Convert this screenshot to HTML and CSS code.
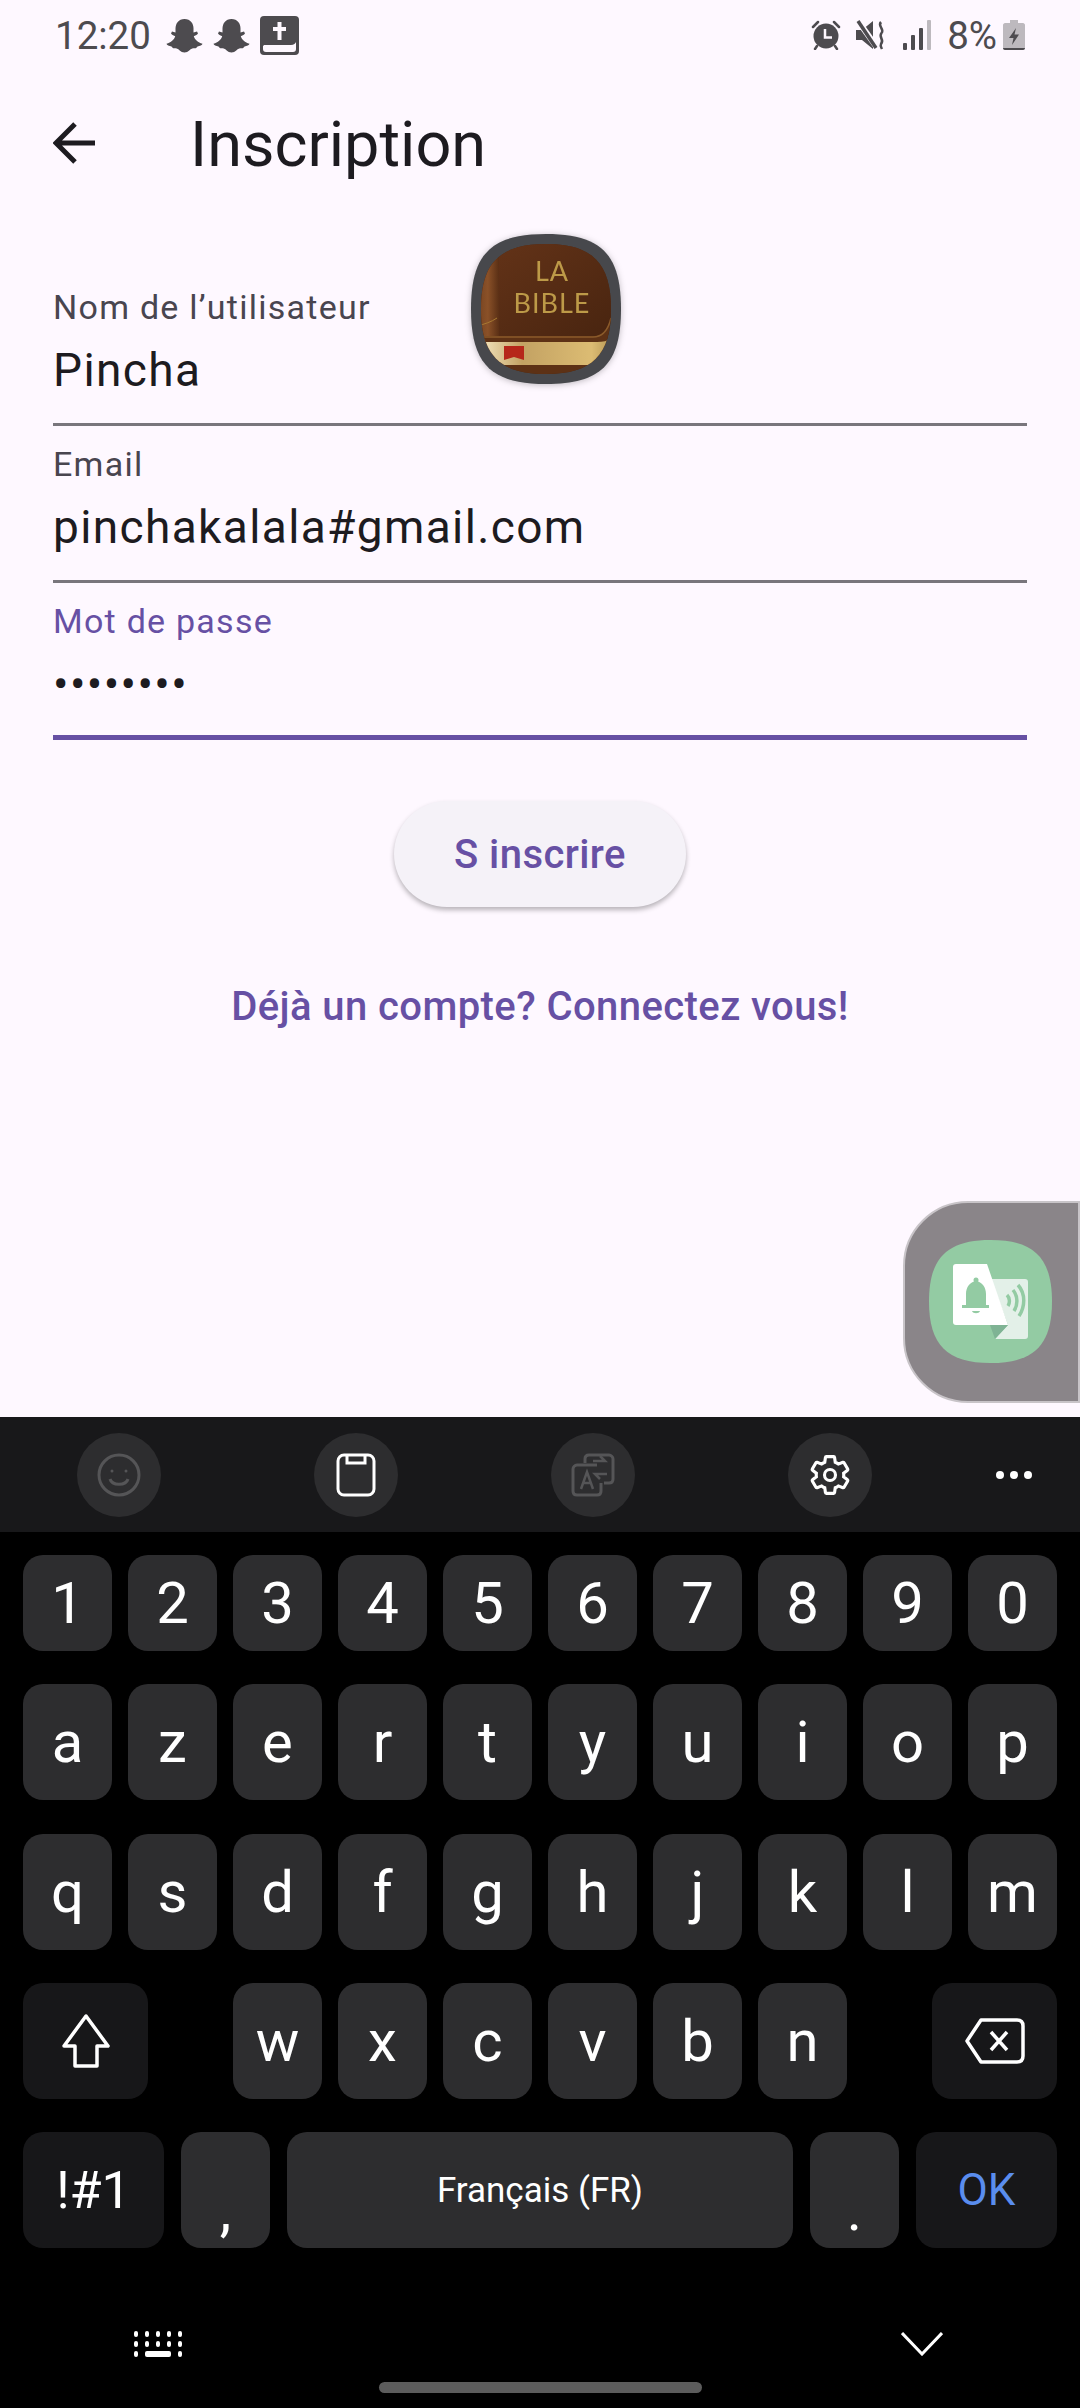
FILE: index.html
```html
<!DOCTYPE html>
<html lang="fr">
<head>
  <meta charset="UTF-8">
  <meta name="viewport" content="width=device-width, initial-scale=1.0">
  <title>Inscription</title>
  <link rel="stylesheet" href="styles.css">
</head>
<body>
<div class="page">

  <div class="status">
    <div class="status-left">
      <span class="time">12:20</span>
      <svg class="ghost" viewBox="0 0 37 35"><path d="M18.5 1C24.5 1 27.5 5.5 27.5 10.5V14.5L31 13.6L32 15.5C31 17 29 17.6 27.8 18.2C28.8 21.5 32 24.5 36.5 25.8C36.3 27.6 33.8 28 31.5 28.6C30.5 30.5 29.5 30.4 27.5 30.2C24.5 30 22.5 34.5 18.5 34.5C14.5 34.5 12.5 30 9.5 30.2C7.5 30.4 6.5 30.5 5.5 28.6C3.2 28 .7 27.6 .5 25.8C5 24.5 8.2 21.5 9.2 18.2C8 17.6 6 17 5 15.5L6 13.6L9.5 14.5V10.5C9.5 5.5 12.5 1 18.5 1Z"/></svg>
      <svg class="ghost" viewBox="0 0 37 35"><path d="M18.5 1C24.5 1 27.5 5.5 27.5 10.5V14.5L31 13.6L32 15.5C31 17 29 17.6 27.8 18.2C28.8 21.5 32 24.5 36.5 25.8C36.3 27.6 33.8 28 31.5 28.6C30.5 30.5 29.5 30.4 27.5 30.2C24.5 30 22.5 34.5 18.5 34.5C14.5 34.5 12.5 30 9.5 30.2C7.5 30.4 6.5 30.5 5.5 28.6C3.2 28 .7 27.6 .5 25.8C5 24.5 8.2 21.5 9.2 18.2C8 17.6 6 17 5 15.5L6 13.6L9.5 14.5V10.5C9.5 5.5 12.5 1 18.5 1Z"/></svg>
      <svg class="book-ico" viewBox="0 0 39 39">
        <rect width="39" height="39" rx="4" fill="#4d4b4f"/>
        <path d="M17.500 6H21.500V11H26V15H21.500V24H17.500V15H13V11H17.500Z" fill="#fef8ff"/>
        <path d="M3 30.500C3 29.500 4 29 5 29H31C34 29 35.500 27.500 36 26V33C36 35 35 36 33 36H6C4 36 3 35 3 33Z" fill="#fef8ff"/>
      </svg>
    </div>
    <div class="status-right">
      <svg class="alarm" viewBox="0 0 30 30">
        <circle cx="15" cy="16" r="12.500" fill="#4d4b4f"/>
        <path d="M2 7L7 2M23 2L28 7M6 26L4 29M24 26L26 29" stroke="#4d4b4f" stroke-width="2.500" stroke-linecap="round"/>
        <path d="M14 9V17.500H21" fill="none" stroke="#fef8ff" stroke-width="2.500"/>
      </svg>
      <svg class="mute" viewBox="0 0 30 30">
        <path d="M0 10H6L17 1V29L6 20H0Z" fill="#4d4b4f"/>
        <path d="M2 1L22 29" stroke="#fef8ff" stroke-width="6"/>
        <path d="M2 1L20 28" stroke="#4d4b4f" stroke-width="3.500"/>
        <path d="M25 2C21 6 29 9 25.500 13C22 17 29 20 25 24C24 26 25 27 26 29" fill="none" stroke="#4d4b4f" stroke-width="2.500"/>
      </svg>
      <svg class="signal" viewBox="0 0 28 30">
        <rect x="0" y="23" width="4" height="7" rx="1" fill="#4d4b4f"/>
        <rect x="8" y="15" width="4" height="15" rx="1" fill="#4d4b4f"/>
        <rect x="16" y="8" width="4" height="22" rx="1" fill="#4d4b4f"/>
        <rect x="24" y="0" width="4" height="30" rx="1" fill="#bdb9be"/>
      </svg>
      <span class="percent">8%</span>
      <svg class="battery" viewBox="0 0 22 30">
        <path d="M7 0H15V3H20C21 3 22 4 22 5V28C22 29 21 30 20 30H2C1 30 0 29 0 28V5C0 4 1 3 2 3H7Z" fill="#bdb9be"/>
        <path d="M0 28H22V28C22 29 21 30 20 30H2C1 30 0 29 0 28Z" fill="#4d4b4f"/>
        <path d="M13 8L6 18H10.500L9 25L16 14.500H11.500Z" fill="#4d4b4f"/>
      </svg>
    </div>
  </div>

  <div class="appbar">
    <svg class="back" viewBox="0 0 43 42"><path d="M42 21H3M22 2L3 21L22 40" fill="none" stroke="#1d1b20" stroke-width="5"/></svg>
    <h1 class="title">Inscription</h1>
  </div>

  <form class="form">
    <div class="field">
      <div class="label">Nom de l’utilisateur</div>
      <div class="value">Pincha</div>
    </div>
    <div class="field">
      <div class="label">Email</div>
      <div class="value">pinchakalala#gmail.com</div>
    </div>
    <div class="field field-active">
      <div class="label">Mot de passe</div>
      <div class="value">••••••••</div>
    </div>

    <svg class="logo" viewBox="0 0 150 150">
      <defs>
        <clipPath id="inner"><path d="M75 10C121 10 140 29 140 75C140 121 121 140 75 140C29 140 10 121 10 75C10 29 29 10 75 10Z"/></clipPath>
        <linearGradient id="cover" x1="0" y1="0" x2="1" y2="1"><stop offset="0" stop-color="#673519"/><stop offset="1" stop-color="#46230f"/></linearGradient>
        <linearGradient id="spine" x1="0" y1="0" x2="1" y2="0"><stop offset="0" stop-color="#6a3a1c"/><stop offset=".6" stop-color="#8a5128"/><stop offset="1" stop-color="#5a2f15"/></linearGradient>
        <linearGradient id="pages" x1="0" y1="0" x2="1" y2="0"><stop offset="0" stop-color="#efe0b8"/><stop offset=".3" stop-color="#c3a263"/><stop offset=".85" stop-color="#dcbc73"/><stop offset="1" stop-color="#b89a58"/></linearGradient>
      </defs>
      <path d="M75 0C130 0 150 20 150 75C150 130 130 150 75 150C20 150 0 130 0 75C0 20 20 0 75 0Z" fill="#47484c"/>
      <g clip-path="url(#inner)">
        <rect width="150" height="150" fill="#4f2812"/>
        <rect width="150" height="112" fill="url(#cover)"/>
        <rect width="28" height="112" fill="url(#spine)"/>
        <path d="M6 34C14 33 20 30 26 24M6 92C14 90 20 88 26 84" fill="none" stroke="#a87a32" stroke-width="1"/>
        <path d="M0 102H122C130 102 136 98 140 84H150V140H0Z" fill="#5d3115"/>
        <path d="M10 103H122C131 103 137 97 140 84" fill="none" stroke="#8a5a2a" stroke-width="1.500"/>
        <path d="M15 108C12 112 13 126 17 131H135C140 126 141 112 137 106C133 108 128 108 122 108Z" fill="url(#pages)"/>
        <path d="M33 112H53V126L43 123L33 126Z" fill="#b6271a"/>
      </g>
      <text class="logo-text" x="81" y="47" text-anchor="middle">LA</text>
      <text class="logo-text" x="81" y="79" text-anchor="middle">BIBLE</text>
    </svg>
  </form>

  <div class="actions">
    <button type="button" class="signup">S inscrire</button>
    <a class="login-link">Déjà un compte? Connectez vous!</a>
  </div>

  <div class="float-panel">
    <svg class="float-icon" viewBox="0 0 123 123">
      <path d="M61.500 0C105 0 123 18 123 61.500C123 105 105 123 61.500 123C18 123 0 105 0 61.500C0 18 18 0 61.500 0Z" fill="#93cba3"/>
      <path d="M62 39H96C98 39 99 40 99 42V96C99 98 98 99 96 99H66L79 85Z" fill="#e3f0e8"/>
      <path d="M61 85H79L66 99Z" fill="#7fb394"/>
      <path d="M78 55C81 58 81 63 79 66M84 50C89 56 89 65 85 71M89 45C97 54 96 67 90 76" fill="none" stroke="#93cba3" stroke-width="3.500"/>
      <path d="M27 24H58L79 85H27C25 85 24 84 24 82V27C24 25 25 24 27 24Z" fill="#fff"/>
      <path d="M47 41C41 42 37 47 37 54V65H33V68H60V65H57V54C57 47 53 42 47 41Z" fill="#93cba3"/>
      <circle cx="47" cy="40" r="2.500" fill="#93cba3"/>
      <path d="M43 71H51C50 74 44 74 43 71Z" fill="#93cba3"/>
    </svg>
  </div>

  <div class="keyboard">
    <div class="toolbar">
      <div class="tool"><svg class="tool-icon" viewBox="0 0 44 44" fill="none" stroke="#555557" stroke-width="3"><circle cx="22" cy="22" r="20"/><circle cx="15" cy="18" r="1.500" fill="#555557" stroke="none"/><circle cx="29" cy="18" r="1.500" fill="#555557" stroke="none"/><path d="M13 26C15 33 29 33 31 26"/></svg></div>
      <div class="tool"><svg class="tool-icon" viewBox="0 0 44 44" fill="none" stroke="#fff" stroke-width="3"><rect x="4" y="2" width="36" height="40" rx="6"/><path d="M13 2V10H31V2"/></svg></div>
      <div class="tool"><svg class="tool-icon" viewBox="0 0 44 44" fill="none" stroke="#555557" stroke-width="3"><path d="M14 10V6C14 3 16 2 18 2H38C40 2 42 4 42 6V26C42 29 40 30 38 30H33"/><path d="M30 30V38C30 41 28 42 26 42H6C4 42 2 41 2 38V16C2 14 4 12 6 12H26"/><path d="M22 8H34L29 3M36 21H24L29 26" stroke-width="2.500"/><path d="M10 36L16 19L22 36M12 30H20" stroke-width="2.500"/></svg></div>
      <div class="tool"><svg class="tool-icon" viewBox="0 0 24 24" fill="none" stroke="#fff" stroke-width="1.700"><path d="M19.430 12.980c.04-.32.07-.64.07-.98 0-.34-.03-.66-.07-.98l2.110-1.650c.19-.15.24-.42.12-.64l-2-3.460c-.09-.16-.26-.25-.44-.25-.06 0-.12.01-.17.03l-2.490 1c-.52-.4-1.080-.73-1.690-.98l-.38-2.650C14.460 2.180 14.250 2 14 2h-4c-.25 0-.46.18-.49.42l-.38 2.650c-.61.25-1.170.59-1.690.98l-2.490-1c-.06-.02-.12-.03-.18-.03-.17 0-.34.09-.43.25l-2 3.460c-.13.22-.07.49.12.64l2.110 1.650c-.04.32-.07.65-.07.98 0 .33.03.66.07.98l-2.110 1.650c-.19.15-.24.42-.12.64l2 3.460c.09.16.26.25.44.25.06 0 .12-.01.17-.03l2.490-1c.52.4 1.080.73 1.690.98l.38 2.650c.03.24.24.42.49.42h4c.25 0 .46-.18.49-.42l.38-2.650c.61-.25 1.170-.59 1.690-.98l2.490 1c.06.02.12.03.18.03.17 0 .34-.09.43-.25l2-3.460c.12-.22.07-.49-.12-.64l-2.110-1.650z"/><circle cx="12" cy="12" r="3"/></svg></div>
      <div class="more"><i></i><i></i><i></i></div>
    </div>

    <div class="keys">
      <div class="row row-digits">
        <div class="key">1</div><div class="key">2</div><div class="key">3</div><div class="key">4</div><div class="key">5</div>
        <div class="key">6</div><div class="key">7</div><div class="key">8</div><div class="key">9</div><div class="key">0</div>
      </div>
      <div class="row">
        <div class="key">a</div><div class="key">z</div><div class="key">e</div><div class="key">r</div><div class="key">t</div>
        <div class="key">y</div><div class="key">u</div><div class="key">i</div><div class="key">o</div><div class="key">p</div>
      </div>
      <div class="row">
        <div class="key">q</div><div class="key">s</div><div class="key">d</div><div class="key">f</div><div class="key">g</div>
        <div class="key">h</div><div class="key">j</div><div class="key">k</div><div class="key">l</div><div class="key">m</div>
      </div>
      <div class="row row-split">
        <div class="key key-fn key-wide">
          <svg class="shift" viewBox="0 0 50 54" fill="none" stroke="#fff" stroke-width="3.500" stroke-linejoin="round"><path d="M25 2L47 32H36V52H14V32H3Z"/></svg>
        </div>
        <div class="row-mid">
          <div class="key">w</div><div class="key">x</div><div class="key">c</div><div class="key">v</div><div class="key">b</div><div class="key">n</div>
        </div>
        <div class="key key-fn key-wide">
          <svg class="del" viewBox="0 0 60 46" fill="none" stroke="#fff" stroke-width="3.500" stroke-linejoin="round"><path d="M16 2H52C56 2 58 4 58 8V38C58 42 56 44 52 44H16L2 23Z"/><path d="M26 14L42 32M42 14L26 32"/></svg>
        </div>
      </div>
      <div class="row row-bottom">
        <div class="key key-fn key-sym">!#1</div>
        <div class="key key-low">,</div>
        <div class="key key-space">Français (FR)</div>
        <div class="key key-low">.</div>
        <div class="key key-fn key-ok">OK</div>
      </div>
    </div>

    <div class="nav">
      <svg class="nav-kbd" viewBox="0 0 48 26" fill="#fff">
        <rect x="0" y="0" width="4" height="6" rx="2"/><rect x="11" y="0" width="4" height="6" rx="2"/><rect x="22" y="0" width="4" height="6" rx="2"/><rect x="33" y="0" width="4" height="6" rx="2"/><rect x="44" y="0" width="4" height="6" rx="2"/>
        <rect x="0" y="10" width="4" height="6" rx="2"/><rect x="11" y="10" width="4" height="6" rx="2"/><rect x="22" y="10" width="4" height="6" rx="2"/><rect x="33" y="10" width="4" height="6" rx="2"/><rect x="44" y="10" width="4" height="6" rx="2"/>
        <rect x="0" y="20" width="4" height="6" rx="2"/><rect x="11" y="20" width="26" height="6" rx="2"/><rect x="44" y="20" width="4" height="6" rx="2"/>
      </svg>
      <svg class="nav-down" viewBox="0 0 42 24" fill="none" stroke="#fff" stroke-width="3"><path d="M1 1L21 22L41 1"/></svg>
    </div>
    <div class="pill"></div>
  </div>

</div>
</body>
</html>
```

FILE: styles.css
```css
* {
    box-sizing: border-box;
}

body {
    margin: 0;
    font-family: Roboto, "Noto Sans", sans-serif;
    background-color: #fef8ff;
}

.page {
    position: relative;
    display: flex;
    flex-direction: column;
    width: 1080px;
    height: 2408px;
    overflow: hidden;
}

/* barre d'etat */
.status {
    display: flex;
    justify-content: space-between;
    align-items: center;
    height: 70px;
    padding: 0 55px 0 55px;
    color: #4d4b4f;
}

.status-left, .status-right {
    display: flex;
    align-items: center;
}

.time {
    font-size: 38.500px;
    margin-right: 15px;
}

.ghost {
    width: 37px;
    height: 35px;
    margin-right: 10px;
    fill: #4d4b4f;
}

.book-ico {
    width: 39px;
    height: 39px;
}

.alarm {
    width: 30px;
    height: 30px;
    margin-right: 15px;
}

.mute {
    width: 30px;
    height: 30px;
    margin-right: 17px;
}

.signal {
    width: 28px;
    height: 30px;
    margin-right: 16px;
}

.percent {
    font-size: 38.500px;
    margin-right: 6px;
}

.battery {
    width: 22px;
    height: 30px;
}

/* titre */
.appbar {
    display: flex;
    align-items: center;
    height: 150px;
    padding-left: 53px;
}

.back {
    width: 43px;
    height: 42px;
    margin-top: -4px;
}

.title {
    margin: -2px 0 0 94px;
    font-size: 63px;
    font-weight: 400;
    color: #1d1b20;
}

/* formulaire */
.form {
    position: relative;
    display: flex;
    flex-direction: column;
    margin: 49px 53px 0;
}

.field {
    height: 157px;
    padding-top: 18px;
    border-bottom: 3px solid #79767c;
}

.label {
    height: 40px;
    line-height: 40px;
    font-size: 34px;
    letter-spacing: 1.250px;
    color: #49454f;
}

.value {
    height: 62px;
    margin-top: 12px;
    line-height: 62px;
    font-size: 46px;
    letter-spacing: 1.375px;
    color: #1d1b20;
}

.field-active {
    border-bottom: 5px solid #6750a4;
}

.field-active .label {
    color: #6750a4;
}

.logo {
    position: absolute;
    left: 418px;
    top: -35px;
    width: 150px;
    height: 150px;
    filter: drop-shadow(0 1px 3px rgba(0, 0, 0, 0.25));
}

.logo-text {
    font-family: Lato, "Open Sans", sans-serif;
    font-size: 27px;
    letter-spacing: 1px;
    fill: #bd9a48;
}

/* boutons */
.actions {
    display: flex;
    flex-direction: column;
    align-items: center;
    margin-top: 61px;
}

.signup {
    width: 292px;
    height: 106px;
    border: none;
    border-radius: 53px;
    background-color: #f5f2f8;
    color: #6750a4;
    font-family: inherit;
    font-size: 40px;
    font-weight: 500;
    letter-spacing: 0.420px;
    box-shadow: 0 3px 5px rgba(0, 0, 0, 0.28);
}

.login-link {
    margin-top: 76px;
    font-size: 40px;
    font-weight: 500;
    letter-spacing: 0.420px;
    color: #6750a4;
}

/* bulle flottante */
.float-panel {
    position: absolute;
    left: 903px;
    top: 1201px;
    display: flex;
    width: 177px;
    height: 202px;
    padding: 37px 0 0 24px;
    background-color: #8a8589;
    border: 2px solid #c8c4c8;
    border-radius: 65px 0 0 65px;
}

.float-icon {
    width: 123px;
    height: 123px;
}

/* clavier */
.keyboard {
    position: absolute;
    left: 0;
    right: 0;
    bottom: 0;
    height: 991px;
    background-color: #000;
}

.toolbar {
    position: relative;
    display: flex;
    align-items: center;
    height: 115px;
    padding-left: 77px;
    gap: 153px;
    background-color: #18181a;
}

.tool {
    display: flex;
    justify-content: center;
    align-items: center;
    width: 84px;
    height: 84px;
    border-radius: 50%;
    background-color: #2d2d2f;
}

.tool-icon {
    width: 44px;
    height: 44px;
}

.more {
    display: flex;
    gap: 6px;
    margin-left: -29px;
}

.more i {
    width: 8px;
    height: 8px;
    border-radius: 50%;
    background-color: #fff;
}

.keys {
    display: flex;
    flex-direction: column;
    gap: 33.300px;
    padding: 23px 23px 0;
}

.row {
    display: flex;
    gap: 16px;
    height: 116px;
}

.row-digits {
    height: 96px;
}

.row-split {
    justify-content: space-between;
}

.row-bottom {
    gap: 17px;
}

.row-mid {
    display: flex;
    gap: 16px;
}

.key {
    flex: 1;
    display: flex;
    justify-content: center;
    align-items: center;
    border-radius: 20px;
    background-color: #2d2d2f;
    color: #fff;
    font-size: 58px;
}

.row-mid .key {
    flex: none;
    width: 89px;
}

.key-fn {
    background-color: #171719;
}

.key-wide {
    flex: none;
    width: 125px;
}

.key-sym {
    flex: none;
    width: 141px;
    font-size: 52px;
}

.key-low {
    flex: none;
    width: 89px;
    padding-top: 40px;
}

.key-space {
    font-size: 35px;
}

.key-ok {
    flex: none;
    width: 141px;
    font-size: 44px;
    color: #5a8dee;
}

.shift {
    width: 50px;
    height: 54px;
}

.del {
    width: 60px;
    height: 46px;
}

.nav {
    display: flex;
    justify-content: space-between;
    align-items: center;
    height: 26px;
    margin-top: 83px;
    padding: 0 137px 0 134px;
}

.nav-kbd {
    width: 48px;
    height: 26px;
}

.nav-down {
    width: 42px;
    height: 24px;
}

.pill {
    width: 323px;
    height: 11px;
    margin: 25px auto 0;
    border-radius: 6px;
    background-color: #5c5c5c;
}
```
